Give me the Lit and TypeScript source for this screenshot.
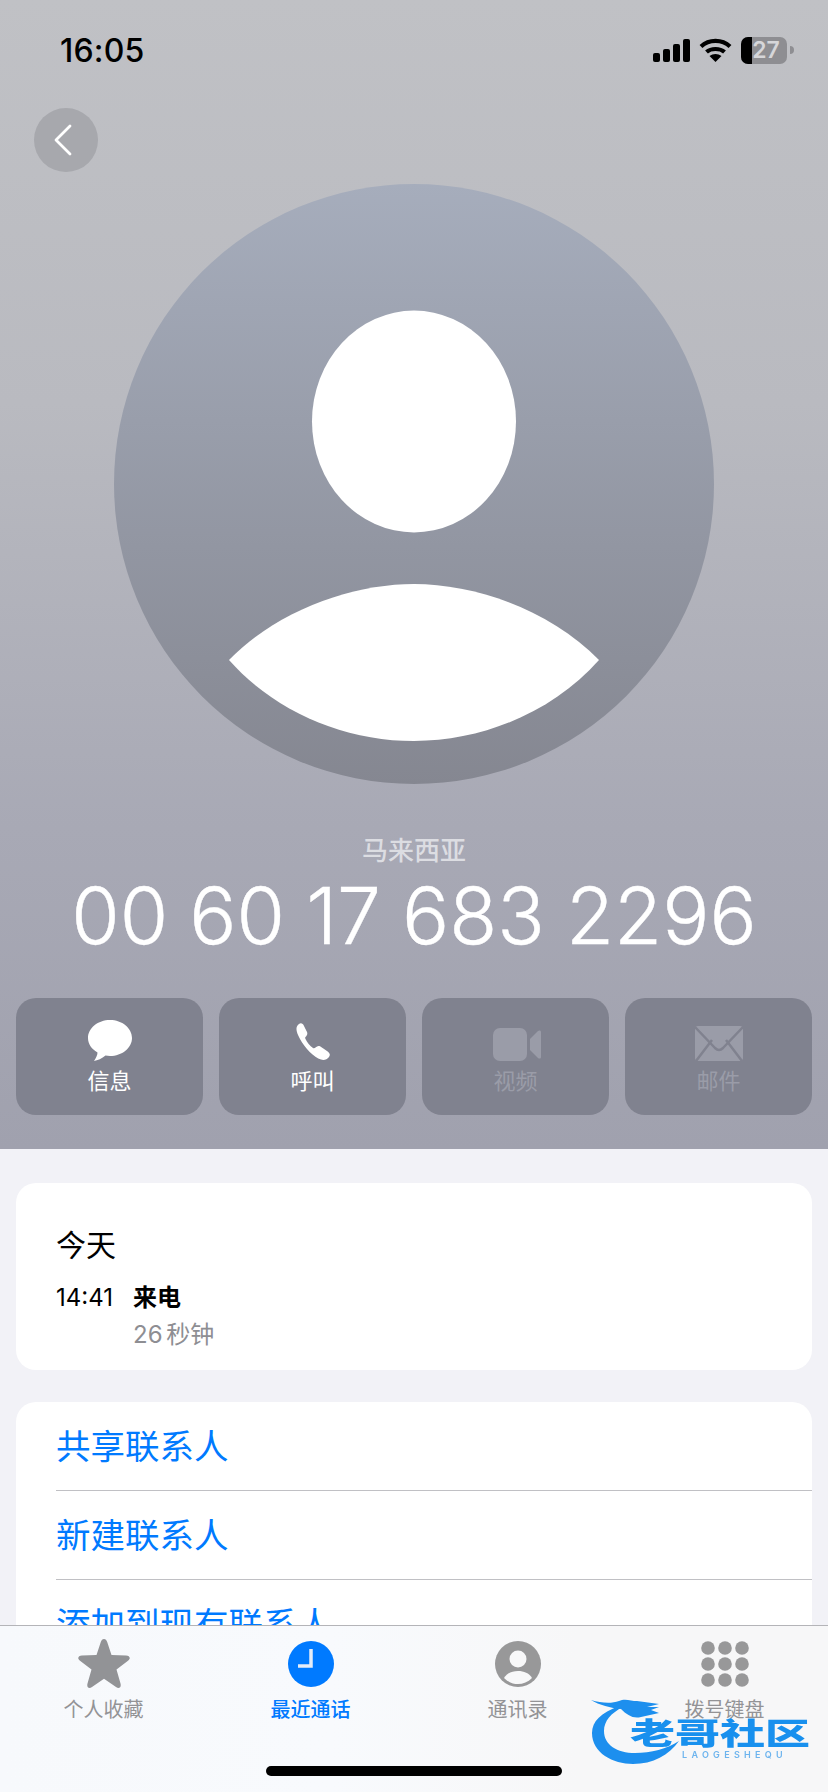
import { LitElement, html, css, svg } from "lit";
import { customElement } from "lit/decorators.js";

const grid = [0, 1, 2].flatMap((r) => [0, 1, 2].map((c) => svg`<circle cx=${7 + c * 17} cy=${7 + r * 16} r="6.8" fill="#989899"></circle>`));

@customElement("app-root")
export class AppRoot extends LitElement {
  static styles = css`
    :host { display: block; width: 828px; height: 1792px; position: relative; overflow: hidden; background: #f2f2f7;
      font-family: Inter, "Noto Sans CJK SC", sans-serif; color: #000; }
    svg { display: block; }
    .head { height: 1149px; box-sizing: border-box; background: linear-gradient(180deg, #c0c1c5 0%, #b9bac0 35%, #a8a9b5 72%, #a0a1ae 100%); display: flex; flex-direction: column; }
    .status { height: 100px; display: flex; align-items: center; justify-content: space-between; padding: 0 34px 0 60px; }
    .time { font-size: 32px; font-weight: 500; letter-spacing: 0.2px; }
    .sys { display: flex; align-items: center; gap: 9px; }
    .batt { display: flex; align-items: center; gap: 3px; }
    .batt-body { width: 46px; height: 27px; border-radius: 7px; overflow: hidden; background: #8e8e92; position: relative; display: flex; }
    .batt-fill { width: 11px; background: #000; }
    .batt-num { flex: 1; color: #d6d6d9; font-size: 23px; font-weight: 600; line-height: 27px; text-align: center; margin-left: -7px; }
    .nub { width: 4px; height: 8px; background: #8e8e92; border-radius: 0 4px 4px 0; }
    .back { width: 64px; height: 64px; border-radius: 50%; background: #a7a8ad; margin: 8px 0 0 34px; display: flex; align-items: center; justify-content: center; }
    .chev { margin-right: 6px; }
    .avatar { margin: 12px auto 0; width: 600px; height: 600px; }
    .country { margin-top: 50px; text-align: center; font-size: 26px; line-height: 34px; font-weight: 500; color: #dcdde2; }
    .number { margin-top: 3px; text-align: center; font-size: 78.500px; line-height: 90px; font-weight: 300; color: #fff; white-space: nowrap; word-spacing: -1px; -webkit-text-stroke: 0.4px #fff; }
    .actions { margin-top: 37px; padding: 0 16px; display: grid; grid-template-columns: repeat(4, 187px); justify-content: space-between; }
    .action { height: 117px; box-sizing: border-box; border-radius: 20px; background: #80828f; display: flex; flex-direction: column; align-items: center; color: #fff; font-size: 22px; line-height: 30px; }
    .action.off { color: #9a9ca8; }
    .ic { height: 68px; display: flex; align-items: flex-end; padding-bottom: 5px; box-sizing: border-box; }
    .video { margin-left: 3px; }
    .card { margin: 0 16px; background: #fff; border-radius: 20px; }
    .today { margin-top: 34px; height: 187px; box-sizing: border-box; padding: 43px 40px 0; }
    .day { font-size: 30px; line-height: 38px; }
    .call { display: grid; grid-template-columns: 77px 1fr; margin-top: 16px; font-size: 24px; line-height: 36px; }
    .kind { font-weight: 700; }
    .dur { grid-column: 2; color: #8e8e93; line-height: 38px; word-spacing: -3px; }
    .links { margin-top: 32px; padding-left: 40px; height: 400px; }
    .link { height: 88px; box-sizing: content-box; display: flex; align-items: center; color: #007aff; font-size: 34.500px; border-bottom: 1px solid #c0c0c4; }
    .link span { margin-top: -4px; }
    .link:last-child { border-bottom: 0; }
    .tabs { position: absolute; left: 0; right: 0; bottom: 0; height: 167px; box-sizing: border-box; border-top: 1px solid #b4b4b8; background: linear-gradient(90deg, #f7f9fc 0%, #f8fafd 40%, #f7f7f8 70%, #f7f7f8 100%); display: grid; grid-template-columns: repeat(4, 207px); }
    .tab { display: flex; flex-direction: column; align-items: center; color: #939396; font-size: 20px; line-height: 28px; }
    .tab.on { color: #007aff; font-weight: 500; }
    .tab-ic { height: 70px; display: flex; align-items: center; padding-top: 5px; box-sizing: border-box; }
    .home { position: absolute; left: 266px; bottom: 16px; width: 296px; height: 10px; border-radius: 5px; background: #000; }
    .mark { position: absolute; left: 591px; top: 1693px; width: 222px; height: 74px; filter: blur(0.6px); }
    .mark svg { position: absolute; left: 0; top: 0; }
    .mark-title { position: absolute; left: 39px; top: 20px; font-size: 30px; line-height: 40px; font-weight: 900; white-space: nowrap; transform: scaleX(1.5); transform-origin: left center; color: #1890ee; }
    .mark-sub { position: absolute; left: 91px; top: 56px; font-size: 9px; line-height: 12px; letter-spacing: 4.300px; color: #6db4ee; font-weight: 600; white-space: nowrap; }
  `;

  render() {
    return html`
      <div class="head">
        <div class="status">
          <div class="time">16:05</div>
          <div class="sys">
            <svg width="37" height="23" viewBox="0 0 37 23" fill="#000">
              <rect x="0" y="14" width="7" height="9" rx="2"></rect>
              <rect x="10" y="10" width="7" height="13" rx="2"></rect>
              <rect x="20" y="5" width="7" height="18" rx="2"></rect>
              <rect x="30" y="0" width="7" height="23" rx="2"></rect>
            </svg>
            <svg width="33" height="24" viewBox="0 0 33 24" fill="none" stroke="#000" stroke-width="4.200">
              <path d="M2 8.500 C10 1, 23 1, 31 8.500"></path>
              <path d="M7.500 14 C12 10, 21 10, 25.500 14"></path>
              <path d="M16.500 24 L10.500 18 C14 15.300 19 15.300 22.500 18 Z" fill="#000" stroke="none"></path>
            </svg>
            <div class="batt">
              <div class="batt-body"><div class="batt-fill"></div><div class="batt-num">27</div></div>
              <div class="nub"></div>
            </div>
          </div>
        </div>
        <div class="back">
          <svg class="chev" width="20" height="32" viewBox="0 0 20 32" fill="none" stroke="#fff" stroke-width="2.800" stroke-linecap="round" stroke-linejoin="round"><path d="M17 2 L3 16 L17 30"></path></svg>
        </div>
        <svg class="avatar" viewBox="0 0 600 600">
          <defs>
            <linearGradient id="av" x1="0" y1="0" x2="0" y2="1"><stop offset="0" stop-color="#a6adbc"></stop><stop offset="1" stop-color="#858791"></stop></linearGradient>
          </defs>
          <circle cx="300" cy="300" r="300" fill="url(#av)"></circle>
          <ellipse cx="300" cy="237.500" rx="102" ry="111" fill="#fff"></ellipse>
          <path d="M115 476 C165 425 240 400 300 400 C360 400 435 425 485 476 C440 527 370 557 300 557 C230 557 160 527 115 476 Z" fill="#fff"></path>
        </svg>
        <div class="country">马来西亚</div>
        <div class="number">00 60 17 683 2296</div>
        <div class="actions">
          <div class="action">
            <div class="ic"><svg width="44" height="41" viewBox="0 0 44 41" fill="#fff"><path d="M22 0 C34 0 44 8 44 18 C44 28 34 36 22 36 C20.500 36 19 35.800 17.500 35.500 C14 38.500 9.500 40.500 6 41 C8 38 9.500 35 9.500 32.500 C3.500 29 0 24 0 18 C0 8 10 0 22 0 Z"></path></svg></div>
            <div>信息</div>
          </div>
          <div class="action">
            <div class="ic"><svg width="37" height="38" viewBox="0 0 37 38" fill="#fff"><path d="M5 1 C7 -0.500 9 0.500 10 3 L13 9 C13.800 11 13 12.500 11.500 14 C11 14.500 11 15 11.500 16 C13 19 16 23 19 25 C20 25.500 20.800 25.200 21.500 24.500 C23 23 24.500 22.500 26 23.300 L33 28 C36 30 36.500 32 35 34 C33 36.500 30 37.500 27 36.500 C20 34.500 11 25 6 16 C2 9 1 4 5 1 Z"></path></svg></div>
            <div>呼叫</div>
          </div>
          <div class="action off">
            <div class="ic"><svg class="video" width="48" height="33" viewBox="0 0 48 33" fill="#9a9ca8"><rect x="0" y="0" width="34" height="33" rx="7"></rect><path d="M37 11 L45 3 C46.500 1.800 48 2.500 48 4 L48 29 C48 30.500 46.500 31.200 45 30 L37 22 Z"></path></svg></div>
            <div>视频</div>
          </div>
          <div class="action off">
            <div class="ic"><svg width="48" height="35" viewBox="0 0 48 35"><rect x="0" y="0" width="48" height="35" rx="3" fill="#9a9ca8"></rect><path d="M0 1 L20 22 Q24 26 28 22 L48 1 M1 35 L17 14 M47 35 L31 14" fill="none" stroke="#80828f" stroke-width="2.500"></path></svg></div>
            <div>邮件</div>
          </div>
        </div>
      </div>
      <div class="card today">
        <div class="day">今天</div>
        <div class="call">
          <div>14:41</div>
          <div class="kind">来电</div>
          <div class="dur">26 秒钟</div>
        </div>
      </div>
      <div class="card links">
        <div class="link"><span>共享联系人</span></div>
        <div class="link"><span>新建联系人</span></div>
        <div class="link"><span>添加到现有联系人</span></div>
      </div>
      <div class="tabs">
        <div class="tab">
          <div class="tab-ic"><svg width="52" height="50" viewBox="0 0 52 50" fill="#929396"><path d="M26 0 C27.500 0 28.500 1 29.200 3 L33.500 16 L48 16.500 C52 16.800 53 19.500 50 21.800 L38.500 30.500 L42.500 44.500 C43.500 48.500 41 50 38 48 L26 39.800 L14 48 C11 50 8.500 48.500 9.500 44.500 L13.500 30.500 L2 21.800 C-1 19.500 0 16.800 4 16.500 L18.500 16 L22.800 3 C23.500 1 24.500 0 26 0 Z"></path></svg></div>
          <div>个人收藏</div>
        </div>
        <div class="tab on">
          <div class="tab-ic"><svg width="46" height="46" viewBox="0 0 46 46"><circle cx="23" cy="23" r="23" fill="#007aff"></circle><path d="M23 8 L23 25 L10 25" fill="none" stroke="#e4ecf8" stroke-width="3.500"></path></svg></div>
          <div>最近通话</div>
        </div>
        <div class="tab">
          <div class="tab-ic"><svg width="46" height="46" viewBox="0 0 46 46"><circle cx="23" cy="23" r="23" fill="#989899"></circle><circle cx="23" cy="18" r="8.500" fill="#f8f8f9"></circle><path d="M9 37 C12 32 17 30 23 30 C29 30 34 32 37 37 C33 41 28 43 23 43 C18 43 13 41 9 37 Z" fill="#f8f8f9"></path></svg></div>
          <div>通讯录</div>
        </div>
        <div class="tab">
          <div class="tab-ic"><svg width="48" height="46" viewBox="0 0 48 46">${grid}</svg></div>
          <div>拨号键盘</div>
        </div>
      </div>
      <div class="home"></div>
      <div class="mark">
        <svg width="222" height="74" viewBox="0 0 222 74" fill="#1d8fee">
          <path d="M28 13 C10 20 1 28 1 40 C1 60 22 71 42 71 C62 71 78 62 88 48 C76 56 60 60 44 60 C26 60 13 52 13 38 C13 28 20 20 32 14 Z"></path>
          <path d="M0 7 C10 10 20 11 28 8 C34 5 40 8 46 8 L68 11 L56 14 L68 14 L60 17 L68 20 L50 24 C42 26 36 22 30 16 C20 15 8 12 0 7 Z"></path>
        </svg>
        <div class="mark-title">老哥社区</div>
        <div class="mark-sub">LAOGESHEQU</div>
      </div>
    `;
  }
}
